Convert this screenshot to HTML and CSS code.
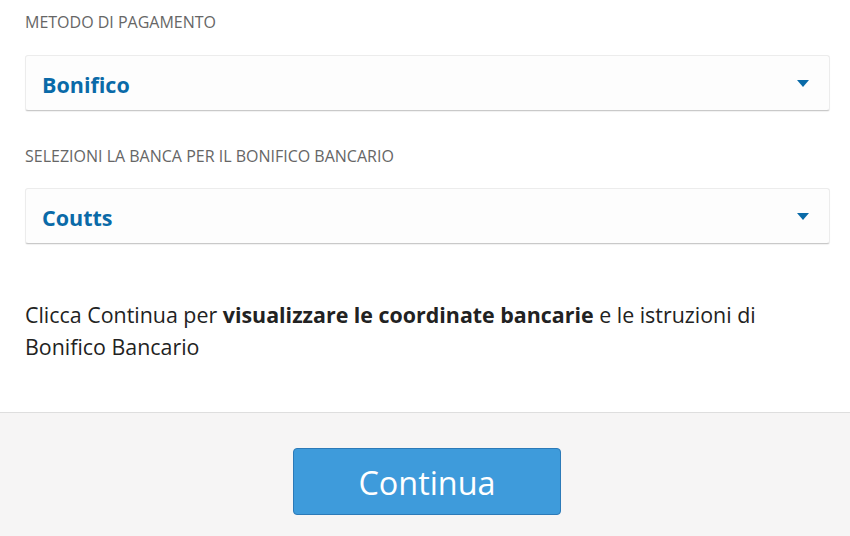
FILE: index.html
```html
<!DOCTYPE html>
<html lang="it">
<head>
    <meta charset="UTF-8">
    <meta name="viewport" content="width=device-width, initial-scale=1.0">
    <title>Metodo di pagamento</title>
    <link rel="stylesheet" href="styles.css">
</head>
<body>
    <div class="content">
        <div class="label">METODO DI PAGAMENTO</div>
        <div class="select">
            <span class="value">Bonifico</span>
            <span class="arrow"></span>
        </div>

        <div class="label">SELEZIONI LA BANCA PER IL BONIFICO BANCARIO</div>
        <div class="select">
            <span class="value">Coutts</span>
            <span class="arrow"></span>
        </div>

        <p class="info">Clicca Continua per <b>visualizzare le coordinate bancarie</b> e le istruzioni di Bonifico Bancario</p>
    </div>

    <footer class="actions">
        <button class="continue">Continua</button>
    </footer>
</body>
</html>
```

FILE: styles.css
```css
body {
    margin: 0;
    font-family: 'Open Sans', 'Liberation Sans', sans-serif;
    background: #fff;
}

.content {
    padding: 12px 20px 0 25px;
}

.label {
    font-size: 16px;
    line-height: 20px;
    color: #666;
    margin-bottom: 23px;
}

.select {
    height: 56px;
    box-sizing: border-box;
    background: #fdfdfd;
    border: 1px solid #ececec;
    border-bottom-color: #c9c9c9;
    border-radius: 3px;
    box-shadow: 0 1px 1px rgba(0, 0, 0, 0.06);
    display: flex;
    align-items: center;
    justify-content: space-between;
    padding: 0 20px 0 16px;
    margin-bottom: 35px;
}

.select + .label {
    margin-bottom: 22px;
}

.value {
    font-size: 21.5px;
    font-weight: bold;
    color: #0a6aa8;
    margin-top: 2px;
}

.arrow {
    width: 0;
    height: 0;
    border-left: 6px solid transparent;
    border-right: 6px solid transparent;
    border-top: 7px solid #0a6aa8;
}

.info {
    margin: 55px 0 0;
    font-size: 21.4px;
    line-height: 32px;
    color: #222;
    padding-right: 50px;
}

.info b {
    font-weight: bold;
}

.actions {
    margin-top: 49px;
    border-top: 1px solid #dedede;
    background: #f6f5f5;
    height: 124px;
    display: flex;
    justify-content: center;
    padding: 35px 0 0 4px;
    box-sizing: border-box;
}

.continue {
    width: 268px;
    height: 67px;
    background: #3e9bdb;
    border: 1px solid #2c7ab8;
    border-radius: 4px;
    color: #fff;
    font-family: 'Open Sans', 'Liberation Sans', sans-serif;
    font-size: 32.4px;
    cursor: pointer;
}
```
